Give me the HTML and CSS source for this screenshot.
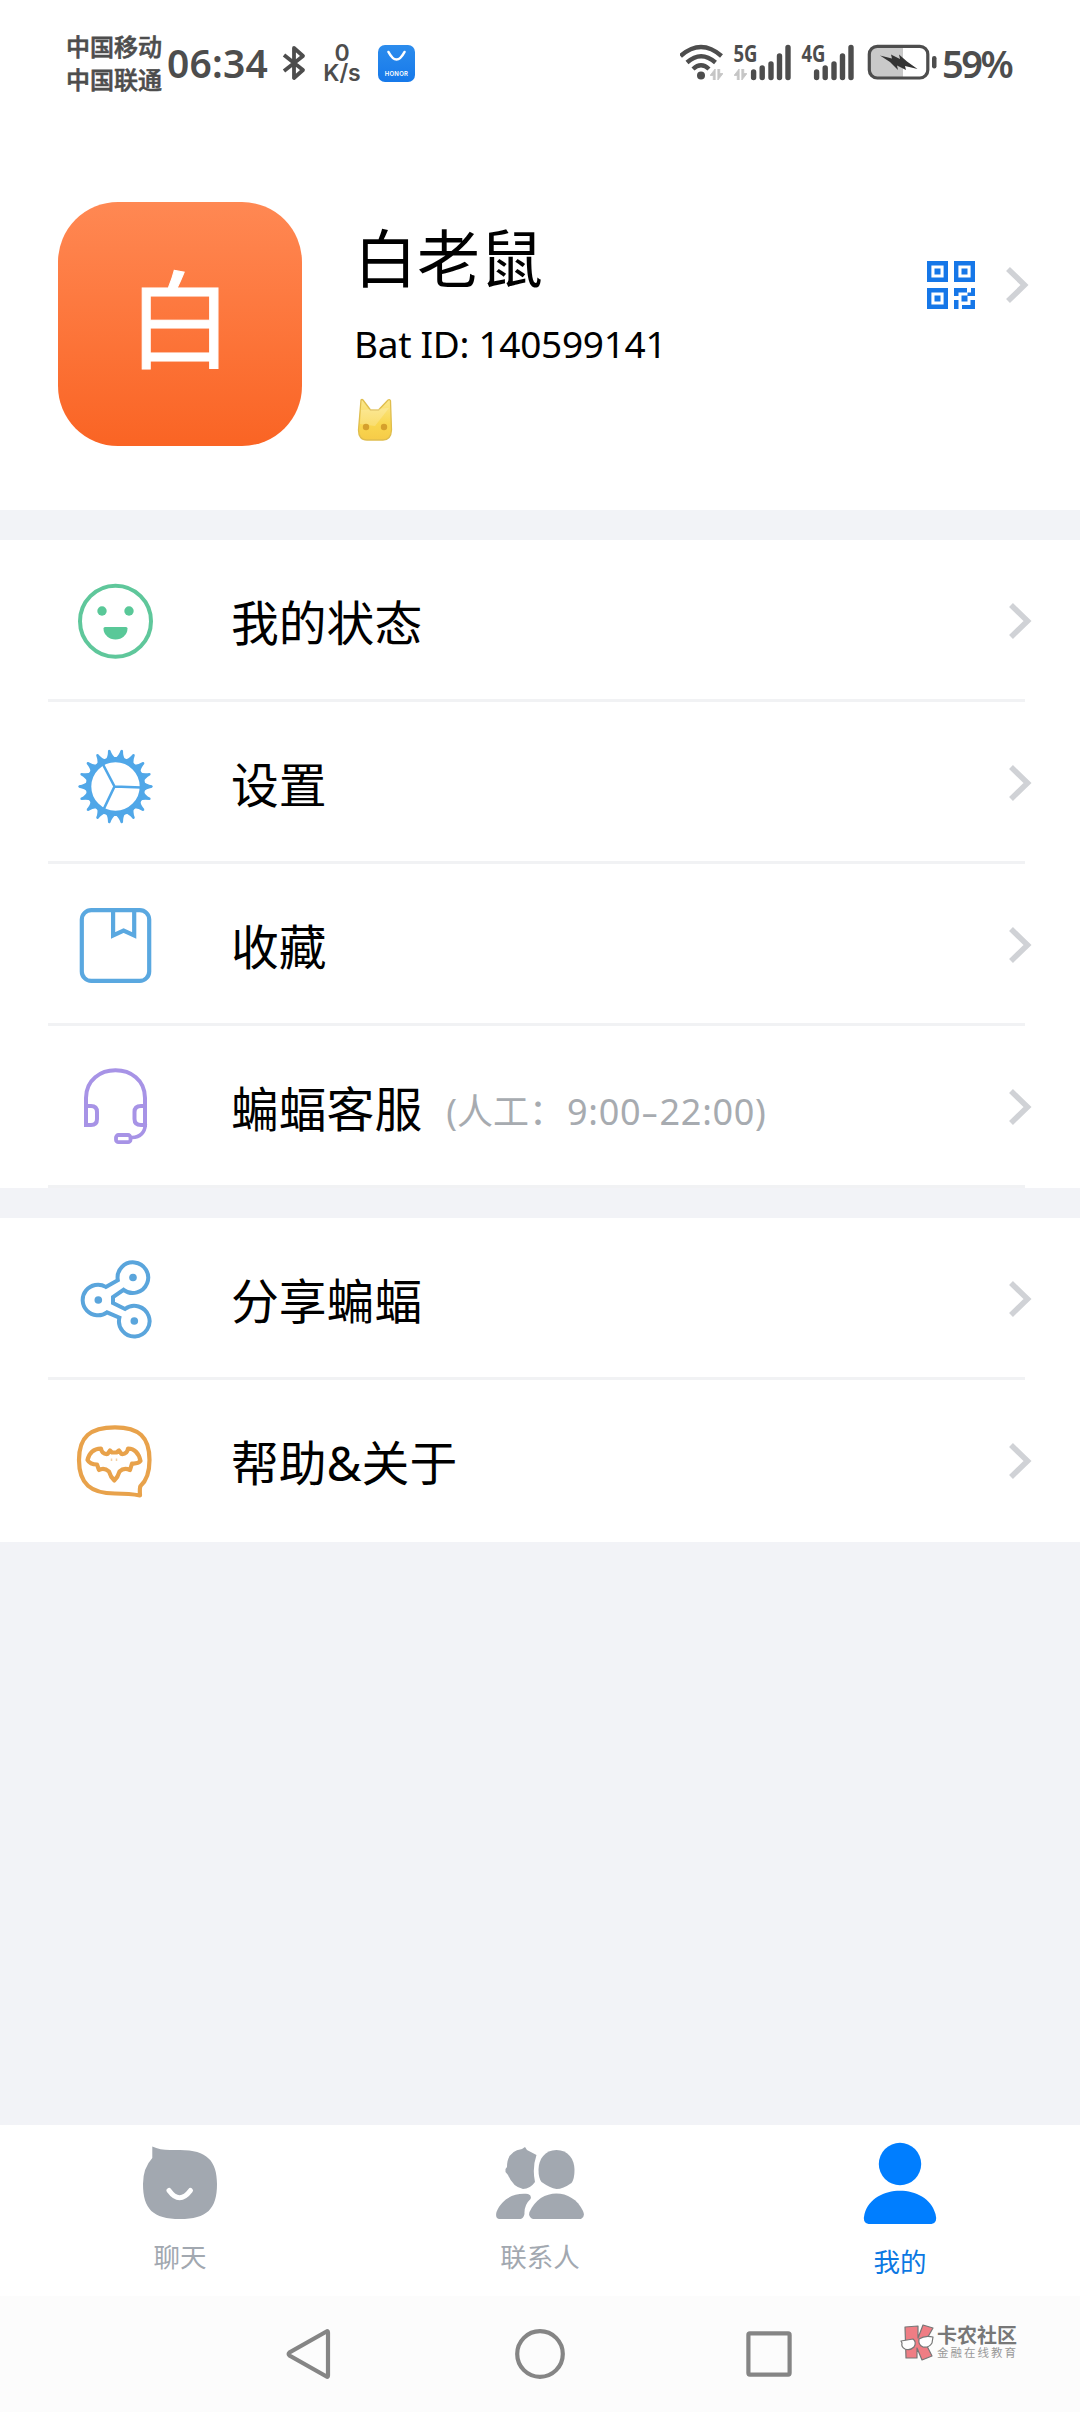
FILE: index.html
```html
<!DOCTYPE html>
<html lang="zh-CN">
<head>
<meta charset="utf-8">
<title>我的</title>
<link rel="stylesheet" href="styles.css">
</head>
<body>
<svg width="0" height="0" class="defs">
  <symbol id="chevron" viewBox="0 0 24 38"><path d="M3 3 L19.5 19 L3 35" fill="none" stroke="#d0d2d6" stroke-width="5.6"/></symbol>
  <symbol id="data" viewBox="0 0 14 12"><path d="M5.500 0V12H3.500V7H0ZM8.500 12V0H10.500V5H14Z" fill="#c6c6c6" stroke="#c6c6c6"/></symbol>
</svg>
<div class="screen">
  <header class="status">
    <div class="carriers"><span>中国移动</span><span>中国联通</span></div>
    <div class="clock">06:34</div>
    <svg class="bluetooth" viewBox="0 0 24 36"><path d="M2 10 L21 25 L12 33 V3 L21 11 L2 26" fill="none" stroke="#4d4d4d" stroke-width="3.800" stroke-linejoin="round"/></svg>
    <div class="speed"><span>0</span><span>K/s</span></div>
    <div class="honor">
      <svg viewBox="0 0 37 18"><path d="M10.500 7 Q18.500 22 26.500 7" fill="none" stroke="#fff" stroke-width="2.600" stroke-linecap="round"/></svg>
      <span>HONOR</span>
    </div>
    <div class="signals">
      <svg class="wifi" viewBox="680 44 46 38">
        <g fill="none" stroke="#4d4d4d" stroke-width="4.400"><path d="M680.500 56 Q701 38 721.500 56"/><path d="M687 62.500 Q701 50 715.500 62.500"/><path d="M693 69 Q701 61.500 709 69"/></g>
        <circle cx="701" cy="75.500" r="4" fill="#4d4d4d"/>
        <use href="#data" x="710" y="69" width="13" height="11"/>
      </svg>
      <svg class="cell" viewBox="733 44 58 38">
        <text x="733.500" y="62" class="net" textLength="24" lengthAdjust="spacingAndGlyphs">5G</text>
        <use href="#data" x="734" y="69" width="13" height="11"/>
        <path d="M753.600 72V77.500M762.200 68V77.500M771 64V77.500M779.500 56V77.500M788 47.500V77.500" stroke="#4d4d4d" stroke-width="5.400" stroke-linecap="round"/>
      </svg>
      <svg class="cell" viewBox="796 44 58 38">
        <text x="801.500" y="62" class="net" textLength="24" lengthAdjust="spacingAndGlyphs">4G</text>
        <path d="M816.600 72V77.500M825.200 68V77.500M834 64V77.500M842.500 56V77.500M851 47.500V77.500" stroke="#4d4d4d" stroke-width="5.400" stroke-linecap="round"/>
      </svg>
      <svg class="battery" viewBox="867 44 72 37">
        <path d="M875 46.500H903V78H875Q869.500 78 869.500 70V54Q869.500 46.500 875 46.500Z" fill="#c9c9c9"/>
        <rect x="869.300" y="46.300" width="58.500" height="31.700" rx="8" fill="none" stroke="#4d4d4d" stroke-width="3.200"/>
        <rect x="932" y="56" width="4.500" height="12.500" rx="2.200" fill="#4d4d4d"/>
        <path d="M880 55.500L892 58.500L891 54.500L900 59L899 54.500L907 61.500L917.500 69L905 66L906 70L897 65.500L898 70L890 62Z" fill="#333"/>
      </svg>
      <span class="percent">59%</span>
    </div>
  </header>

  <section class="profile">
    <div class="avatar">白</div>
    <div class="identity">
      <div class="name">白老鼠</div>
      <div class="batid">Bat ID: 140599141</div>
      <svg class="cat" viewBox="0 0 36 44">
        <defs><linearGradient id="gold" x2="0" y2="1"><stop offset="0" stop-color="#fbe88e"/><stop offset=".6" stop-color="#f9d750"/><stop offset="1" stop-color="#f6cb48"/></linearGradient></defs>
        <path d="M4 2 Q5 1 6 2 L13.500 12 H21.500 L31 2 Q33 1 33.500 3 L34.500 32 Q34 42 26 42 H10 Q1.500 42 1.500 32 Z" fill="url(#gold)" stroke="#dfbd4d" stroke-width="1.300"/>
        <path d="M32 10 L18 28 L3 26 L4 12 Z" fill="#fff" opacity=".2"/>
        <circle cx="9" cy="29" r="3.200" fill="#d6a02c"/><circle cx="27" cy="29" r="3.200" fill="#d6a02c"/>
      </svg>
    </div>
    <div class="qr">
      <svg class="qrcode" viewBox="0 0 48 48">
        <g fill="none" stroke="#1677e8" stroke-width="4.400"><path d="M2.200 2.200H18.800V18.800H2.200ZM29.200 2.200H45.800V18.800H29.200ZM2.200 29.200H18.800V45.800H2.200Z"/></g>
        <path d="M7.500 7.500h6v6h-6zM34.500 7.500h6v6h-6zM7.500 34.500h6v6h-6zM34.500 34.500h6v6h-6zM27 27H40V31.500H31.500V35H27ZM44 27H48V35H44V31.500H40.500V35H44ZM27 39H31.500V48H27ZM43.500 39H48V48H35V44H43.500Z" fill="#1677e8"/>
      </svg>
      <svg class="chevron"><use href="#chevron"/></svg>
    </div>
  </section>

  <section class="group">
    <div class="row">
      <svg class="icon" viewBox="74 579 84 84"><circle cx="115.500" cy="621.300" r="35.500" fill="none" stroke="#5fc79b" stroke-width="4"/><g fill="#59c898"><circle cx="102" cy="611" r="4.700"/><circle cx="129" cy="611" r="4.700"/><path d="M103.500 628.500Q103.500 627 105 627H126Q127.500 627 127.500 628.500A12 11 0 0 1 103.500 628.500Z"/></g></svg>
      <span class="label">我的状态</span><svg class="chevron"><use href="#chevron"/></svg>
    </div>
    <div class="row">
      <svg class="icon" viewBox="-41.500 -45.500 84 84">
        <defs><path id="tooth" d="M28 -5.200 Q30.500 -2.200 36.500 -1.200 Q38.200 0 36.500 1.200 Q30.500 2.200 28 5.200Z"/></defs>
        <circle r="26.900" fill="none" stroke="#50a7e8" stroke-width="5.400"/>
        <g fill="#50a7e8"><use href="#tooth"/><use href="#tooth" transform="rotate(20)"/><use href="#tooth" transform="rotate(40)"/><use href="#tooth" transform="rotate(60)"/><use href="#tooth" transform="rotate(80)"/><use href="#tooth" transform="rotate(100)"/><use href="#tooth" transform="rotate(120)"/><use href="#tooth" transform="rotate(140)"/><use href="#tooth" transform="rotate(160)"/><use href="#tooth" transform="rotate(180)"/><use href="#tooth" transform="rotate(200)"/><use href="#tooth" transform="rotate(220)"/><use href="#tooth" transform="rotate(240)"/><use href="#tooth" transform="rotate(260)"/><use href="#tooth" transform="rotate(280)"/><use href="#tooth" transform="rotate(300)"/><use href="#tooth" transform="rotate(320)"/><use href="#tooth" transform="rotate(340)"/></g>
        <path d="M-1 0L26 1M-1 0L-13 -23M-1 0L-12 23" stroke="#50a7e8" stroke-width="2.600"/>
      </svg>
      <span class="label">设置</span><svg class="chevron"><use href="#chevron"/></svg>
    </div>
    <div class="row">
      <svg class="icon" viewBox="74 903 84 84"><g fill="none" stroke="#5aa8e0" stroke-width="4.200"><rect x="81.800" y="910.100" width="67.400" height="70.800" rx="9.500"/><path d="M113.100 910V935.500L123.600 930.500L134.200 935.500V910"/></g></svg>
      <span class="label">收藏</span><svg class="chevron"><use href="#chevron"/></svg>
    </div>
    <div class="row">
      <svg class="icon" viewBox="74 1065 84 84"><g fill="none" stroke="#a793e6" stroke-width="4"><path d="M86 1125V1098C86 1061 145 1061 145 1098V1125"/><path d="M86 1106H91Q97 1106 97 1112V1119Q97 1125 91 1125H86ZM145 1106H141Q134.500 1106 134.500 1112V1119Q134.500 1125 141 1125H145Z"/><path d="M145.500 1124Q144.500 1137 132 1137.500" stroke-width="3.400"/><rect x="116" y="1135" width="14.500" height="7.200" rx="2.500" stroke-width="3.800"/></g></svg>
      <span class="label">蝙蝠客服</span><span class="hint">(人工：<span class="hours">9:00<i>-</i>22:00)</span></span><svg class="chevron"><use href="#chevron"/></svg>
    </div>
  </section>

  <section class="group">
    <div class="row">
      <svg class="icon" viewBox="74 1257 84 84">
        <g fill="none" stroke="#5aa5dc" stroke-width="4"><path d="M105.800 1286.900L117.800 1280.200A15.300 15.300 0 1 1 123.600 1289.800L113 1297V1303L125 1309A15.300 15.300 0 1 1 119.400 1317.600L107 1312.400A15.300 15.300 0 1 1 105.800 1286.900Z"/></g>
        <g fill="#5aa5dc"><circle cx="133" cy="1277.500" r="3.800"/><circle cx="98.300" cy="1300" r="3.800"/><circle cx="134.300" cy="1321" r="3.800"/></g>
      </svg>
      <span class="label">分享蝙蝠</span><svg class="chevron"><use href="#chevron"/></svg>
    </div>
    <div class="row last">
      <svg class="icon" viewBox="74 1419 84 84"><g fill="none" stroke="#e8a24b" stroke-width="4.200" stroke-linejoin="round"><path d="M140 1495.500Q130 1493.500 115 1493.500C91 1493.500 79 1484 79 1460C79 1437 90 1427.300 115 1427.300C139 1427.300 149.500 1437 149.500 1460Q149.500 1478 140.500 1486Q139.500 1488 140 1495.500Z"/><path d="M87.500 1460Q90 1449 101 1448.500Q102 1454.500 107.500 1454L110 1450.500L112 1452.500H116.500L119 1450.500L121.500 1454Q127 1454.500 128 1448.500Q138 1449 140.500 1461Q138 1464 132 1463.500L130 1470Q124 1467 119.500 1471.500Q118 1477 114.300 1480.500Q110.500 1477 109 1471.500Q104 1467 99 1470L97 1464.500Q90 1464.500 87.500 1460Z"/></g><path d="M111.500 1458.500v2.500M116.500 1458.500v2.500" stroke="#f3cfa3" stroke-width="1.500"/></svg>
      <span class="label">帮助&amp;关于</span><svg class="chevron"><use href="#chevron"/></svg>
    </div>
  </section>

  <nav class="tabs">
    <div class="tab">
      <svg viewBox="135 2141 90 90"><path d="M152.300 2146.500Q160 2150 170 2150H180C207 2150 217 2161 217 2184C217 2209 207 2219 180 2219C153 2219 143 2209 143 2184Q143 2168 152.300 2158Z" fill="#a2a8b0"/><path d="M169 2190.500Q179.500 2205 190.500 2190.500" fill="none" stroke="#fff" stroke-width="5" stroke-linecap="round"/></svg>
      <span>聊天</span>
    </div>
    <div class="tab">
      <svg viewBox="495 2141 90 90"><g fill="#a2a8b0"><path d="M522 2149L525 2147L527 2150L536.500 2155Q532 2168 535 2182Q530 2189 523 2189Q513 2187 508 2175L505.500 2172V2169L507 2167Q507 2151 522 2149Z"/><path d="M556.500 2150C568 2150 574.500 2159 574.500 2170Q574.500 2179 571.500 2183Q563 2189 556.500 2189Q550 2188 541.500 2182Q538.500 2178 538.500 2170C538.500 2159 545 2150 556.500 2150Z"/><path d="M499 2219Q495 2218 496.500 2212C502 2198 515 2192.500 528 2194Q532 2195.500 530.500 2199Q524 2205 524.500 2214Q523.500 2218.500 520.500 2219Z"/><path d="M533 2219Q528 2217 529.500 2212C540 2187.500 572 2187.500 583 2211Q585.500 2217 581 2219Z"/></g></svg>
      <span>联系人</span>
    </div>
    <div class="tab active">
      <svg viewBox="855 2141 90 90"><g fill="#007eff"><circle cx="900" cy="2164" r="21.200"/><path d="M868.500 2224Q862 2223 864.500 2214C873 2183 927 2183 935.500 2214Q938 2223 931.500 2224Z"/></g></svg>
      <span>我的</span>
    </div>
  </nav>

  <footer class="sysnav">
    <svg viewBox="280 2324 60 60"><path d="M326.500 2331.500Q328 2330.500 328 2332.500V2375.500Q328 2377.500 326.500 2376.500L289.500 2355.500Q288 2354 289.500 2352.500Z"/></svg>
    <svg viewBox="510 2324 60 60"><circle cx="540" cy="2354" r="22.800"/></svg>
    <svg viewBox="739 2324 60 60"><rect x="748.400" y="2333.400" width="41.200" height="41.200" rx="1.500"/></svg>
    <div class="brand">
      <svg viewBox="899 2324 36 38"><g stroke="#777" stroke-width="1.200" stroke-linejoin="round"><path d="M905 2327L918 2326V2338L923 2325L933 2328L925 2342L932 2356L922 2360L917 2348V2358H906Z" fill="#ef7d84"/><path d="M901 2341L913 2339Q917 2342 914 2347Q910 2351 905 2349Q901 2347 902 2343ZM919 2339Q925 2335 933 2337L932 2343Q929 2348 923 2347Q918 2345 919 2339Z" fill="#fff"/></g></svg>
      <div class="words"><b>卡农社区</b><span>金融在线教育</span></div>
    </div>
  </footer>
</div>
</body>
</html>
```
FILE: styles.css
```css
* { box-sizing: border-box; }
body {
  margin: 0;
  background: #f2f3f7;
  color: #000;
  font-family: "Noto Sans", "Noto Sans CJK SC", sans-serif;
}
svg { display: block; flex: none; }
.defs { display: none; }
.screen {
  width: 1080px;
  height: 2412px;
  display: flex;
  flex-direction: column;
  overflow: hidden;
}

/* Status bar */
.status {
  height: 128px;
  padding: 0 62px 0 66px;
  background: #fff;
  display: flex;
  align-items: flex-start;
  color: #4d4d4d;
  white-space: nowrap;
}
.carriers {
  width: 96px;
  margin-top: 29px;
  display: flex;
  flex-direction: column;
  font: 500 24px/33px "Noto Sans CJK SC", sans-serif;
  -webkit-text-stroke: 0.6px #4d4d4d;
}
.clock {
  width: 104px;
  margin: 38px 0 0 5px;
  font: 600 39px/50px "Noto Sans", sans-serif;
  letter-spacing: 0.2px;
}
.bluetooth { width: 24px; height: 36px; margin: 45px 0 0 11px; }
.speed {
  width: 42px;
  margin: 43px 0 0 15px;
  display: flex;
  flex-direction: column;
  align-items: center;
  font: 600 23px/20px Inter, sans-serif;
}
.honor {
  width: 37px;
  height: 37px;
  margin: 45px 0 0 15px;
  border-radius: 7px;
  background: linear-gradient(#2c8ced, #1679ea);
  color: #fff;
  text-align: center;
}
.honor svg { width: 37px; height: 18px; }
.honor span {
  display: block;
  margin-top: 6px;
  font: 600 6px/10px Inter, sans-serif;
  letter-spacing: 0.3px;
}
.signals { margin: 44px 0 0 auto; display: flex; }
.wifi { width: 46px; height: 38px; }
.cell { width: 58px; height: 38px; margin-left: 7px; overflow: visible; }
.cell + .cell { margin-left: 5px; }
.net { font: 700 22.5px "Noto Sans", sans-serif; fill: #4d4d4d; }
.battery { width: 72px; height: 37px; margin-left: 13px; }
.percent {
  width: 76px;
  margin: -6px 0 0 3px;
  font: 600 38px/50px "Noto Sans", sans-serif;
  letter-spacing: -2.5px;
}

/* Profile header */
.profile {
  height: 382px;
  padding: 74px 51px 0 58px;
  background: #fff;
  display: flex;
  align-items: flex-start;
}
.avatar {
  width: 244px;
  height: 244px;
  border-radius: 60px;
  background: linear-gradient(#ff8853, #fa6424);
  color: #fff;
  font: 400 106px/224px "Noto Sans CJK SC", sans-serif;
  -webkit-text-stroke: 1px #fff;
  text-align: center;
}
.identity { margin-left: 53px; padding-top: 10px; }
.name { margin-left: -1px; font-size: 63px; line-height: 92px; }
.batid {
  margin: 15px 0 0 -1px;
  font-size: 37px;
  line-height: 50px;
  letter-spacing: -0.3px;
  white-space: nowrap;
}
.cat { width: 36px; height: 44px; margin: 29px 0 0 2px; }
.qr {
  margin-left: auto;
  padding-top: 59px;
  display: flex;
  align-items: center;
}
.qrcode { width: 48px; height: 48px; }
.chevron { width: 24px; height: 38px; }
.qr .chevron { margin-left: 30px; }

/* Menu */
.group { margin-top: 30px; background: #fff; }
.row {
  height: 162px;
  padding: 0 48px 0 74px;
  display: flex;
  align-items: center;
  background: linear-gradient(#f1f2f4, #f1f2f4) 48px 100% / 977px 3px no-repeat;
}
.row.last { background: none; }
.icon { width: 84px; height: 84px; margin-right: 73px; }
.label { margin-top: 3px; font-size: 47.8px; line-height: 70px; }
.hint {
  margin: 9px 0 0 24px;
  font-size: 36px;
  line-height: 50px;
  color: #a7abb0;
}
.hours { margin-left: 2px; letter-spacing: 0.7px; }
.hours i {
  display: inline-block;
  font-style: normal;
  transform: scaleX(1.5);
  margin: 0 3px;
}
.row .chevron { margin-left: auto; }

/* Bottom tabs */
.tabs {
  height: 171px;
  margin-top: auto;
  padding-top: 16px;
  background: #fff;
  display: grid;
  grid-template-columns: repeat(3, 1fr);
}
.tab {
  display: flex;
  flex-direction: column;
  align-items: center;
  color: #a2a8b0;
  font-size: 26.5px;
  line-height: 40px;
}
.tab svg { width: 90px; height: 90px; margin-bottom: 6px; }
.tab.active { color: #0b78e3; }
.tab.active svg { margin-bottom: 11px; }

/* System navigation */
.sysnav {
  height: 116px;
  padding: 28px 60px 0 280px;
  background: #fcfcfc;
  display: flex;
}
.sysnav > svg {
  width: 60px;
  height: 60px;
  margin-right: 170px;
  fill: none;
  stroke: #858585;
  stroke-width: 4.2px;
}
.sysnav > svg + svg { margin-right: 169px; }
.sysnav > svg + svg + svg { margin-right: 100px; }
.brand { display: flex; }
.brand svg { width: 36px; height: 38px; }
.words {
  display: flex;
  flex-direction: column;
  margin: -1px 0 0 2px;
  white-space: nowrap;
  font-family: "Noto Sans CJK SC", sans-serif;
}
.words b { font-size: 20px; line-height: 23px; color: #777; }
.words span { font-size: 11.5px; line-height: 13px; letter-spacing: 2px; color: #999; }
```
